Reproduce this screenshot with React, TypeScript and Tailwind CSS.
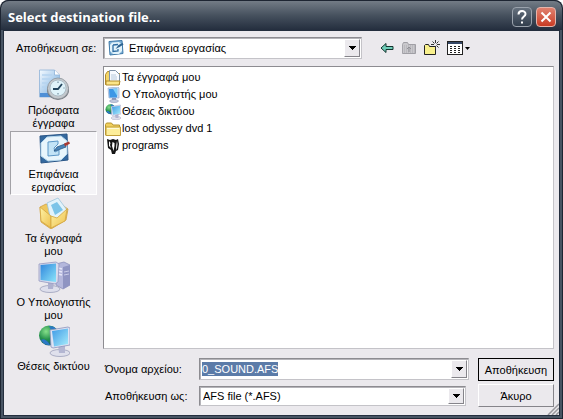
import type { ReactNode } from 'react';

function RecentIcon() {
  return (
    <svg viewBox="0 0 32 32" className="w-8 h-8" aria-hidden="true">
      <defs>
        <linearGradient id="recentPage" x1="0" y1="0" x2="1" y2="1">
          <stop offset="0" stopColor="#f4faff" />
          <stop offset="1" stopColor="#6ea8de" />
        </linearGradient>
      </defs>
      <path d="M1.500 1h15l5 5v22h-20z" fill="url(#recentPage)" stroke="#8fb2d8" strokeWidth=".8" />
      <path d="M16.500 1v5h5" fill="#fff" stroke="#8fb2d8" strokeWidth=".8" />
      <path d="M4 6h10M4 10h8M4 14h6M4 18h5" stroke="#b5d3ef" strokeWidth="1.500" />
      <path d="M2 24h19v4H2z" fill="#4f8fd6" />
      <ellipse cx="20" cy="21" rx="11" ry="10" fill="#75797f" />
      <circle cx="20" cy="19.500" r="10.500" fill="#c3c8cd" stroke="#8d949b" strokeWidth=".8" />
      <circle cx="20" cy="19" r="8" fill="#dff3fa" stroke="#a3b4be" strokeWidth=".8" />
      <path d="M15 20h5l4-5" fill="none" stroke="#24465e" strokeWidth="1.800" />
      <path d="M20 12.500V14M20 24v1.500M26.500 19h-1" stroke="#5e7c8f" />
    </svg>
  );
}

function DesktopIcon({ className }: { className: string }) {
  return (
    <svg viewBox="0 0 32 32" className={className} aria-hidden="true">
      <path d="M2 3l27-2 1 26-27 3z" fill="#34699f" stroke="#2a5687" />
      <path d="M9 4l14-1 6 5v13l-6 6-13 1-7-5V10z" fill="#e8f5fc" stroke="#b4d6ec" />
      <path d="M10 9l10-1v3l-4 4 1 4 4-2v5l-11 1z" fill="#c2e3f6" stroke="#5b96c6" />
      <path d="M16 18l3-4 8-3 1 3-8 3z" fill="#4a84b8" stroke="#285885" strokeWidth=".8" />
      <path d="M26 10.500l5-2 1 2-5 3z" fill="#a93a32" />
    </svg>
  );
}

function SmallDesktopIcon() {
  return (
    <svg viewBox="0 0 16 16" className="w-4 h-4" aria-hidden="true">
      <path d="M1 1.500L14 .5l1 13-13 1.500z" fill="#7fb2d8" stroke="#3f79a8" />
      <path d="M4 2.500l7-.5 3 3v6l-3 3H5l-3-3V5z" fill="#e2f3fb" />
      <path d="M5 5l5-.5M5 5v6.500l5-.5V9" fill="none" stroke="#2f6da2" strokeWidth="1.300" />
      <path d="M7.500 9l3-4 4-2 1 1.500-4 2.500z" fill="#2c628f" />
    </svg>
  );
}

function DocumentsIcon() {
  return (
    <svg viewBox="0 0 32 32" className="w-8 h-8" aria-hidden="true">
      <defs>
        <linearGradient id="docsFolder" x1="0" y1="0" x2="1" y2="1">
          <stop offset="0" stopColor="#fff3a6" />
          <stop offset="1" stopColor="#edc04e" />
        </linearGradient>
      </defs>
      <path d="M2 10l6-3 4 2 12-1 6 4-2 11-15 9-10-7z" fill="#efc75e" stroke="#cfa040" strokeWidth=".8" />
      <path d="M9 6l11-5 9 12-4 9-12 2z" fill="#e2f3fb" stroke="#9cc4dc" strokeWidth=".8" />
      <path d="M13 8l6-3 6 8-8 5z" fill="#7cc4e8" />
      <path d="M2 10l11 9v12L3 24z" fill="url(#docsFolder)" stroke="#d3a640" strokeWidth=".8" />
      <path d="M13 19l6 2 10-9-2 12-14 7z" fill="url(#docsFolder)" stroke="#d3a640" strokeWidth=".8" />
    </svg>
  );
}

function ComputerIcon() {
  return (
    <svg viewBox="0 0 32 32" className="w-8 h-8" aria-hidden="true">
      <defs>
        <linearGradient id="pcScreen" x1="0" y1="0" x2="1" y2="1">
          <stop offset="0" stopColor="#2f86dc" />
          <stop offset="1" stopColor="#8ce4fa" />
        </linearGradient>
      </defs>
      <path d="M18 3l8-2 6 3v20l-7 4-7-4z" fill="#b4b7dc" stroke="#8d90bb" strokeWidth=".8" />
      <path d="M25 6l7-2v20l-7 4z" fill="#8f94c2" />
      <path d="M20 7l4 1M20 10l4 1M20 13l4 1" stroke="#e7e8f8" strokeWidth="1.500" />
      <path d="M26 11l5-1M26 14l5-1" stroke="#c9cce8" />
      <ellipse cx="12" cy="28" rx="10" ry="3.500" fill="#dedfec" stroke="#9c9fba" strokeWidth=".8" />
      <path d="M10 20l6 1-1 7h-5z" fill="#aeb1cf" />
      <path d="M1 3l17-2 3 2-1 18-3 2-16-3z" fill="#d8dbed" stroke="#9498c0" strokeWidth=".8" />
      <path d="M2.500 4L18 2.500V21L2.500 19z" fill="url(#pcScreen)" />
    </svg>
  );
}

function NetworkIcon({ className }: { className: string }) {
  return (
    <svg viewBox="0 0 32 32" className={className} aria-hidden="true">
      <defs>
        <radialGradient id="netGlobe" cx="0.35" cy="0.3" r="0.8">
          <stop offset="0" stopColor="#86e08a" />
          <stop offset="0.5" stopColor="#25914c" />
          <stop offset="1" stopColor="#0f4b80" />
        </radialGradient>
        <linearGradient id="netScreen" x1="0" y1="0" x2="1" y2="1">
          <stop offset="0" stopColor="#3f9ae6" />
          <stop offset="1" stopColor="#a6ecfb" />
        </linearGradient>
      </defs>
      <circle cx="11" cy="10.500" r="10" fill="url(#netGlobe)" />
      <path d="M3 15c3-2 5 0 7 2l2 3c-5 0-7-2-9-5zM11 1c4 0 6 1 7 3l-5 1z" fill="#2b78c5" />
      <ellipse cx="22" cy="28" rx="10" ry="3.500" fill="#dfe0ec" stroke="#9c9fba" strokeWidth=".8" />
      <path d="M20 20h7v8h-6z" fill="#b3b6d2" />
      <path d="M12 5l18-3 2 1v17l-17 3-2-1z" fill="#dfe3f3" stroke="#8d93bb" strokeWidth=".8" />
      <path d="M14 6l16-2.500v15.500L16 21.500z" fill="url(#netScreen)" />
    </svg>
  );
}

function SmallDocumentsIcon() {
  return (
    <svg viewBox="0 0 16 16" className="w-4 h-4" aria-hidden="true">
      <path d="M.5 4.500l2-3h4l1 2h7v11H.5z" fill="#f3d568" stroke="#b18a2a" />
      <path d="M4.500.5h6l4 4v8h-10z" fill="#f7fbff" stroke="#7f93a8" />
      <path d="M6 5h5M6 7h6M6 9h6" stroke="#b6c9dc" />
      <path d="M1 11h14l-1 4H1z" fill="#fbe588" stroke="#b18a2a" />
    </svg>
  );
}

function SmallComputerIcon() {
  return (
    <svg viewBox="0 0 16 16" className="w-4 h-4" aria-hidden="true">
      <path d="M3 1l10-1 1 1v10H4z" fill="#cfdcf2" stroke="#9badcf" strokeWidth=".7" />
      <path d="M4 2l8-.5v9H4.500z" fill="#3b97e6" />
      <path d="M8 2l4.500-.5v8z" fill="#7fd0f8" />
      <path d="M7 11h4v3H7z" fill="#8795b8" />
      <ellipse cx="9" cy="14" rx="4.500" ry="1.500" fill="#c5cce0" stroke="#8088a8" strokeWidth=".5" />
    </svg>
  );
}

function FolderIcon() {
  return (
    <svg viewBox="0 0 16 16" className="w-4 h-4" aria-hidden="true">
      <path d="M.5 3.500l1-1.500h5l1.500 2h6.500v10H.5z" fill="#f0cf5c" stroke="#b5942f" />
      <path d="M1 6h14.500v8.500H1z" fill="#fdee9a" stroke="#c3a03a" />
      <path d="M2 7.500h12" stroke="#fffbd8" />
    </svg>
  );
}

function ProgramsIcon() {
  return (
    <svg viewBox="0 0 16 16" className="w-4 h-4" aria-hidden="true">
      <path d="M2 1l3 1 3-1 3 1 2-1 1 5-1 6-2 1-1 3H7l-1-4-3-2z" fill="#161616" />
      <path d="M4 3l1.500 2L5 7l1 3-2-2zM7.500 4l2 1v3l-1 5-1.500-5zM12 3l.5 3-.5 4-1 2 .3-5z" fill="#fff" />
    </svg>
  );
}

function Caret() {
  return (
    <svg viewBox="0 0 7 4" className="w-[7px] h-1" shapeRendering="crispEdges" aria-hidden="true">
      <path d="M0 0h7L3.500 4z" fill="#000" />
    </svg>
  );
}

const sunken = 'bg-white border border-t-[#8d8c91] border-l-[#8d8c91] border-r-[#c4c3c8] border-b-[#c4c3c8]';
const field = `${sunken} shadow-[inset_1px_1px_0_#b5b4b9]`;
const raised = 'bg-[#ebe9ed] border border-t-white border-l-white border-r-[#85848a] border-b-[#85848a]';

const places: { label: string; icon: ReactNode; active?: boolean }[] = [
  { label: 'Πρόσφατα έγγραφα', icon: <RecentIcon /> },
  { label: 'Επιφάνεια εργασίας', icon: <DesktopIcon className="w-8 h-8" />, active: true },
  { label: 'Τα έγγραφά μου', icon: <DocumentsIcon /> },
  { label: 'Ο Υπολογιστής μου', icon: <ComputerIcon /> },
  { label: 'Θέσεις δικτύου', icon: <NetworkIcon className="w-8 h-8" /> },
];

const files: { name: string; icon: ReactNode }[] = [
  { name: 'Τα έγγραφά μου', icon: <SmallDocumentsIcon /> },
  { name: 'Ο Υπολογιστής μου', icon: <SmallComputerIcon /> },
  { name: 'Θέσεις δικτύου', icon: <NetworkIcon className="w-4 h-4" /> },
  { name: 'lost odyssey dvd 1', icon: <FolderIcon /> },
  { name: 'programs', icon: <ProgramsIcon /> },
];

function TitleBar() {
  return (
    <header className="h-[30px] shrink-0 flex items-center gap-1 pl-[7px] pr-[6px] pt-[2px] rounded-t-lg border-t border-[#1d2532] bg-linear-to-b from-[#737c86] via-[#46515e] to-[#242e3e]">
      <h1 className="grow font-['Open_Sans',sans-serif] text-[13px] leading-4 font-bold text-white">Select destination file...</h1>
      <button aria-label="Help" className="w-5 h-5 flex items-center justify-center rounded-sm border border-[#9aa2ac] bg-linear-to-b from-[#66717e] to-[#323e4d]">
        <svg viewBox="0 0 12 14" className="w-3 h-[14px]" aria-hidden="true">
          <path d="M2.500 4.500C2.500 0 9.500 0 9.500 4c0 2.500-3.500 2.500-3.500 5.500" fill="none" stroke="#fff" strokeWidth="2" />
          <path d="M5 11.500h2v2H5z" fill="#fff" />
        </svg>
      </button>
      <button aria-label="Close" className="w-5 h-5 flex items-center justify-center rounded-sm border border-[#e5b5ac] bg-linear-to-b from-[#e0806e] to-[#c93a22]">
        <svg viewBox="0 0 12 12" className="w-3 h-3" aria-hidden="true">
          <path d="M1.500 1.500l9 9M10.500 1.500l-9 9" stroke="#fff" strokeWidth="2" />
        </svg>
      </button>
    </header>
  );
}

function Toolbar() {
  return (
    <div className="flex items-center gap-[7px]">
      <button aria-label="Back">
        <svg viewBox="0 0 14 12" className="w-[14px] h-3" aria-hidden="true">
          <path d="M1 6l5-4.500v3h7v3H6v3z" fill="#6fcdb8" stroke="#12352f" />
        </svg>
      </button>
      <button aria-label="Up one level" disabled>
        <svg viewBox="0 0 16 14" className="w-4 h-[14px]" aria-hidden="true">
          <path d="M1.500 3.500l1-2h4l1 2h7v9h-13z" fill="#c9c8cc" stroke="#a09fa5" />
          <path d="M1 5h14M1 7h14M1 9h14M1 11h14" stroke="#aaa9af" strokeDasharray="1 1" />
          <path d="M8 11V6M6 8l2-2 2 2" fill="none" stroke="#919096" />
        </svg>
      </button>
      <button aria-label="New folder">
        <svg viewBox="0 0 16 16" className="w-4 h-4" aria-hidden="true">
          <path d="M.5 14.500v-9l1-1h3l1 2h6v8z" fill="#f8f08c" stroke="#222" />
          <path d="M11.500 0v3M11.500 6v3M7 4.500h3M13 4.500h3M8.500 1.500l2 2M14.500 1.500l-2 2M14.500 7.500l-2-2" stroke="#333" />
        </svg>
      </button>
      <button aria-label="View menu" className="flex items-center gap-[2px]">
        <svg viewBox="0 0 16 14" className="w-4 h-[14px]" shapeRendering="crispEdges" aria-hidden="true">
          <path d="M.5.5h15v13H.5z" fill="#fff" stroke="#222" />
          <path d="M1 1h14v2H1z" fill="#344766" />
          <path d="M3 5h2v1H3zM7 5h2v1H7zM11 5h2v1h-2zM3 7h2v1H3zM7 7h2v1H7zM11 7h2v1h-2zM3 9h2v1H3zM7 9h2v1H7zM11 9h2v1h-2zM3 11h2v1H3zM7 11h2v1H7zM11 11h2v1h-2z" fill="#222" />
        </svg>
        <svg viewBox="0 0 5 3" className="w-[5px] h-[3px]" aria-hidden="true"><path d="M0 0h5L2.500 3z" /></svg>
      </button>
    </div>
  );
}

function Places() {
  return (
    <nav className="w-[87px] shrink-0 pt-px">
      {places.map(p => (
        <button
          key={p.label}
          className={`w-full h-16 flex flex-col items-center gap-[3px] pt-px leading-[13px] border ${p.active ? 'bg-[#f5f4f7] border-t-[#a3a2a7] border-l-[#a3a2a7] border-r-white border-b-white' : 'border-transparent'}`}
        >
          {p.icon}
          <span className="max-w-[76px]">{p.label}</span>
        </button>
      ))}
    </nav>
  );
}

function FileList() {
  return (
    <ul className={`grow py-[2px] px-px leading-[17px] ${sunken}`}>
      {files.map(f => (
        <li key={f.name} className="h-[17px] flex items-center gap-px">
          {f.icon}
          <span>{f.name}</span>
        </li>
      ))}
    </ul>
  );
}

function SaveForm() {
  return (
    <form className="flex gap-[9px] pt-[9px] pb-2" onSubmit={e => e.preventDefault()}>
      <div className="grow flex flex-col gap-[6px]">
        <div className="flex items-center">
          <label htmlFor="filename" className="w-24 shrink-0 pl-[2px]">Όνομα αρχείου:</label>
          <div className={`grow h-[22px] flex items-center justify-between pl-[2px] p-px ${field}`}>
            <input id="filename" defaultValue="0_SOUND.AFS" className="[field-sizing:content] h-[14px] bg-[#5b7ba8] text-white outline-none" />
            <button type="button" aria-label="Recent file names" className={`w-4 h-[18px] flex items-center justify-center ${raised}`}><Caret /></button>
          </div>
        </div>
        <div className="flex items-center pr-[3px]">
          <label htmlFor="filetype" className="w-24 shrink-0 pl-[2px]">Αποθήκευση ως:</label>
          <div className={`relative grow h-5 p-px ${field}`}>
            <select id="filetype" className="appearance-none w-full h-full pl-[2px] outline-none">
              <option>AFS file (*.AFS)</option>
            </select>
            <span className={`pointer-events-none absolute right-px inset-y-px w-4 flex items-center justify-center ${raised}`}><Caret /></span>
          </div>
        </div>
      </div>
      <div className="w-[76px] shrink-0 flex flex-col gap-[3px]">
        <button type="submit" className={`h-[23px] outline outline-1 -outline-offset-1 outline-black ${raised}`}>Αποθήκευση</button>
        <button type="button" className={`h-[23px] ${raised}`}>Άκυρο</button>
      </div>
    </form>
  );
}

export default function App() {
  return (
    <div className="bg-white">
      <div className="min-h-screen flex flex-col px-px pb-px rounded-t-lg bg-[#1d2532] font-['Liberation_Sans',Arial,sans-serif] text-[11px] leading-[14px] text-black">
        <TitleBar />
        <main className="relative grow flex flex-col bg-[#ebe9ed] border-x-2 border-b-2 border-[#485463] shadow-[inset_0_0_0_1px_#242e3e] pl-[7px] pr-[6px] pb-px">
          <div className="h-9 shrink-0 flex items-center gap-[18px]">
            <div className="w-[352px] flex items-center">
              <label htmlFor="folder" className="w-[93px] shrink-0 pl-[6px] whitespace-nowrap">Αποθήκευση σε:</label>
              <div className={`relative grow h-[22px] p-px ${field}`}>
                <select id="folder" className="appearance-none w-full h-full pl-6 outline-none">
                  <option>Επιφάνεια εργασίας</option>
                </select>
                <span className="pointer-events-none absolute left-1 top-[2px]"><SmallDesktopIcon /></span>
                <span className={`pointer-events-none absolute right-px inset-y-px w-4 flex items-center justify-center ${raised}`}><Caret /></span>
              </div>
            </div>
            <Toolbar />
          </div>
          <div className="grow flex gap-[6px]">
            <Places />
            <div className="grow flex flex-col">
              <FileList />
              <SaveForm />
            </div>
          </div>
          <svg viewBox="0 0 12 12" className="absolute right-px bottom-px w-3 h-3" aria-hidden="true">
            <path d="M1 12L12 1M5 12l7-7M9 12l3-3" stroke="#98979c" strokeWidth="1.500" />
          </svg>
        </main>
      </div>
    </div>
  );
}
